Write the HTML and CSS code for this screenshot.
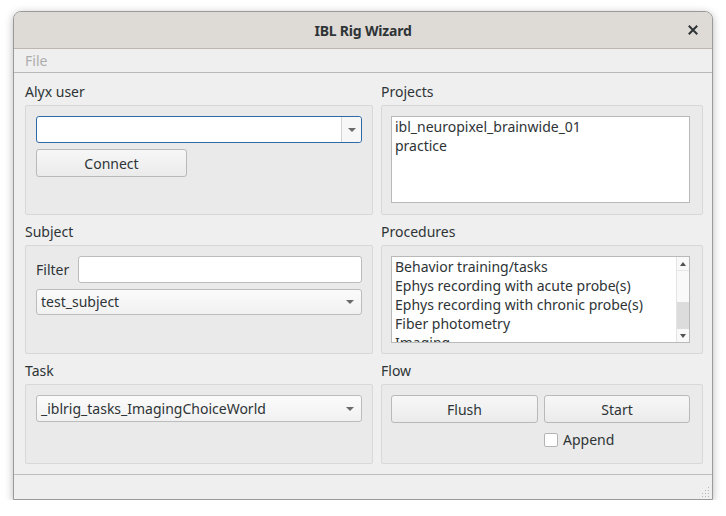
FILE: index.html
```html
<!DOCTYPE html>
<html>
<head>
<meta charset="utf-8">
<link rel="stylesheet" href="styles.css">
</head>
<body>
<div class="window">
  <div class="titlebar">
    <span class="title">IBL Rig Wizard</span>
    <span class="close">
      <svg width="10" height="10" viewBox="0 0 10 10"><path d="M1.5 1.5 L8.5 8.5 M8.5 1.5 L1.5 8.5" stroke="#2e3436" stroke-width="2" stroke-linecap="square"/></svg>
    </span>
  </div>
  <div class="menubar"><span class="menu-item">File</span></div>
  <div class="content">
    <section class="group">
      <div class="group-label">Alyx user</div>
      <div class="group-box box-alyx">
        <div class="combo editable focus">
          <div class="combo-text"></div>
          <div class="combo-btn"><span class="arrow"></span></div>
        </div>
        <button class="btn btn-connect">Connect</button>
      </div>
    </section>
    <section class="group">
      <div class="group-label">Projects</div>
      <div class="group-box box-list">
        <div class="list list-projects">
          <div class="item">ibl_neuropixel_brainwide_01</div>
          <div class="item">practice</div>
        </div>
      </div>
    </section>
    <section class="group">
      <div class="group-label">Subject</div>
      <div class="group-box box-subject">
        <div class="filter-row">
          <span class="filter-label">Filter</span>
          <div class="input"></div>
        </div>
        <div class="combo">
          <div class="combo-text">test_subject</div>
          <div class="combo-btn"><span class="arrow"></span></div>
        </div>
      </div>
    </section>
    <section class="group">
      <div class="group-label">Procedures</div>
      <div class="group-box box-list">
        <div class="list list-procedures">
          <div class="list-items">
            <div class="item">Behavior training/tasks</div>
            <div class="item">Ephys recording with acute probe(s)</div>
            <div class="item">Ephys recording with chronic probe(s)</div>
            <div class="item">Fiber photometry</div>
            <div class="item">Imaging</div>
          </div>
          <div class="scrollbar">
            <div class="sb-arrow"><span class="tri-up"></span></div>
            <div class="sb-track"><div class="sb-thumb"></div></div>
            <div class="sb-arrow"><span class="tri-down"></span></div>
          </div>
        </div>
      </div>
    </section>
    <section class="group">
      <div class="group-label">Task</div>
      <div class="group-box box-task">
        <div class="combo">
          <div class="combo-text">_iblrig_tasks_ImagingChoiceWorld</div>
          <div class="combo-btn"><span class="arrow"></span></div>
        </div>
      </div>
    </section>
    <section class="group">
      <div class="group-label">Flow</div>
      <div class="group-box box-flow">
        <div class="btn-row">
          <button class="btn">Flush</button>
          <button class="btn">Start</button>
        </div>
        <div class="append-row">
          <span class="checkbox"></span>
          <span class="check-label">Append</span>
        </div>
      </div>
    </section>
  </div>
  <div class="statusbar">
    <svg class="grip" width="10" height="10" viewBox="0 0 10 10">
      <g fill="#b5b5b5">
        <rect x="8" y="0" width="1" height="1"/>
        <rect x="5" y="3" width="1" height="1"/><rect x="8" y="3" width="1" height="1"/>
        <rect x="2" y="6" width="1" height="1"/><rect x="5" y="6" width="1" height="1"/><rect x="8" y="6" width="1" height="1"/>
        <rect x="2" y="9" width="1" height="1"/><rect x="5" y="9" width="1" height="1"/><rect x="8" y="9" width="1" height="1"/>
      </g>
    </svg>
  </div>
</div>
</body>
</html>
```

FILE: styles.css
```css
* { box-sizing: border-box; }
html, body { margin: 0; padding: 0; background: #ffffff; }
body {
  padding: 11px 0 0 13px;
  font-family: "Noto Sans", "Open Sans", sans-serif;
  font-size: 14px;
  color: #2e3436;
}
.window {
  width: 700px;
  height: 489px;
  border: 1px solid #9a9a9a;
  border-radius: 8px 8px 0 0;
  background: #efefef;
  box-shadow: 0 2px 8px rgba(0,0,0,0.28);
  display: flex;
  flex-direction: column;
  overflow: hidden;
}
.titlebar {
  height: 37px;
  flex: none;
  background: #dedad6;
  border-bottom: 1px solid #bdb6b0;
  display: flex;
  align-items: center;
  justify-content: center;
  position: relative;
}
.title {
  font-weight: bold;
  font-size: 14px;
  color: #2e3436;
  letter-spacing: -0.2px;
}
.close {
  position: absolute;
  right: 14px;
  top: 13px;
  width: 10px;
  height: 10px;
  display: flex;
}
.menubar {
  height: 24px;
  flex: none;
  background: #efefef;
  border-bottom: 1px solid #b9b9b9;
  display: flex;
  align-items: center;
  padding-left: 11px;
}
.menu-item { color: #adadad; font-size: 14px; }
.content {
  flex: 1;
  display: grid;
  grid-template-columns: 348px 322px;
  grid-template-rows: 140px 139px 110px;
  column-gap: 8px;
  padding: 2px 9px 0 11px;
  border-bottom: 1px solid #bdbdbd;
}
.group { display: flex; flex-direction: column; }
.group-label {
  height: 30px;
  flex: none;
  padding-top: 7px;
  line-height: 20px;
  font-size: 14px;
}
.group-box {
  flex: 1;
  background: #eaeaea;
  border: 1px solid #d8d8d8;
  border-radius: 2px;
}
.box-alyx, .box-subject, .box-task {
  padding: 10px 10px 0 10px;
}
.combo {
  height: 27px;
  background: linear-gradient(#fbfbfb, #f1f1f1);
  border: 1px solid #bcbcbc;
  border-radius: 3px;
  display: flex;
  align-items: center;
}
.combo-text {
  flex: 1;
  padding-left: 4px;
  line-height: 20px;
}
.combo-btn {
  width: 22px;
  align-self: stretch;
  display: flex;
  align-items: center;
  justify-content: center;
}
.arrow {
  width: 0; height: 0;
  border-left: 4px solid transparent;
  border-right: 4px solid transparent;
  border-top: 4px solid #6a6a6a;
}
.combo.editable { background: #ffffff; }
.combo.editable .combo-btn { border-left: 1px solid #d3d3d3; background: #f7f7f7; border-radius: 0 3px 3px 0; width: 20px; }
.combo.focus { border-color: #2f6aa8; }
.btn {
  font-family: inherit;
  font-size: 14px;
  color: #2e3436;
  height: 28px;
  background: linear-gradient(#f7f7f7, #ebebeb);
  border: 1px solid #b9b9b9;
  border-radius: 3px;
  padding: 0;
}
.btn-connect { width: 151px; margin-top: 6px; display: block; }
.box-list { padding: 10px 12px 0 9px; }
.list {
  height: 87px;
  background: #ffffff;
  border: 1px solid #b9b9b9;
}
.item {
  line-height: 19px;
  padding-left: 3px;
  white-space: nowrap;
}
.list-procedures { display: flex; overflow: hidden; }
.list-items { flex: 1; overflow: hidden; }
.scrollbar {
  width: 13px;
  flex: none;
  display: flex;
  flex-direction: column;
  border-left: 1px solid #e4e4e4;
  background: #f9f9f9;
}
.sb-arrow {
  height: 13px;
  display: flex;
  align-items: center;
  justify-content: center;
}
.tri-up, .tri-down {
  width: 0; height: 0;
  border-left: 3.5px solid transparent;
  border-right: 3.5px solid transparent;
}
.tri-up { border-bottom: 4px solid #505050; }
.tri-down { border-top: 4px solid #505050; }
.sb-track { flex: 1; display: flex; flex-direction: column; justify-content: flex-end; border-top: 1px solid #e6e6e6; }
.sb-thumb { height: 27px; background: #dcdcdc; }
.filter-row {
  display: flex;
  align-items: center;
  gap: 8px;
  margin-bottom: 6px;
}
.filter-label { width: 34px; }
.input {
  flex: 1;
  height: 27px;
  background: #ffffff;
  border: 1px solid #bcbcbc;
  border-radius: 3px;
}
.box-subject .combo { height: 26px; }
.box-flow { padding: 10px 11px 0 9px; }
.btn-row {
  display: grid;
  grid-template-columns: 147px 146px;
  column-gap: 6px;
}
.btn-row .btn { height: 28px; }
.append-row {
  display: flex;
  align-items: center;
  margin-top: 7px;
  margin-left: 153px;
}
.checkbox {
  width: 14px;
  height: 14px;
  background: #ffffff;
  border: 1px solid #b4b4b4;
  border-radius: 2px;
  margin-right: 5px;
}
.check-label { line-height: 20px; }
.statusbar {
  height: 24px;
  flex: none;
  background: #efefef;
  display: flex;
  justify-content: flex-end;
  align-items: flex-end;
  padding: 0 2px 2px 0;
}
.grip { display: block; }
```
